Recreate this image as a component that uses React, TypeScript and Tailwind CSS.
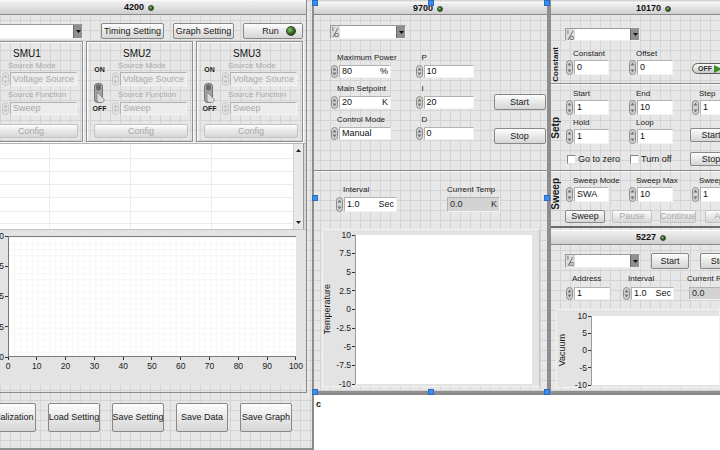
import clsx from 'clsx'
import type { ReactNode } from 'react'

const GRID =
  'bg-[#e7e7e7] bg-[linear-gradient(to_right,#d4d4d4_1px,transparent_1px),linear-gradient(to_bottom,#d4d4d4_1px,transparent_1px)] bg-[size:10px_10px]'

function Led({ big }: { big?: boolean }) {
  return (
    <span
      className={clsx(
        'inline-block shrink-0 rounded-full border border-[#33432d] bg-[radial-gradient(circle_at_35%_35%,#86c466,#2c5c1c_60%,#1b3a10)]',
        big ? 'w-[10px] h-[10px]' : 'w-[6px] h-[6px]'
      )}
    />
  )
}

function Header({ title, className }: { title: string; className?: string }) {
  return (
    <div
      className={clsx(
        'flex items-center gap-[4px] border-t border-t-[#fafafa] border-b border-b-[#8a8a8a] bg-[linear-gradient(#f1f1f1,#cfcfcf)] text-[9px] font-bold text-[#111]',
        className
      )}
    >
      <span>{title}</span>
      <Led />
    </div>
  )
}

function Spin({ h = 14, dim }: { h?: number; dim?: boolean }) {
  const c = dim ? '#bcbcbc' : '#727272'
  return (
    <svg width="7" height={h} viewBox={`0 0 7 ${h}`} className="shrink-0">
      <rect x="0.5" y="0.5" width="6" height={h - 1} rx="3" fill={dim ? '#e3e3e3' : '#d2d2d2'} stroke={dim ? '#c6c6c6' : '#8c8c8c'} />
      <path d="M3.5 2.5L5.5 5.5H1.5Z" fill={c} />
      <path d={`M3.5 ${h - 2.5}L5.5 ${h - 5.5}H1.5Z`} fill={c} />
    </svg>
  )
}

function Field({ className, value, unit, gray, dim }: { className?: string; value: string; unit?: string; gray?: boolean; dim?: boolean }) {
  return (
    <div
      className={clsx(
        'flex items-center justify-between shrink-0 px-[2px] border border-[#b2b2b2] border-b-[#f4f4f4] border-r-[#f4f4f4] text-[9px] whitespace-nowrap',
        gray ? 'bg-[#d3d3d3] text-[#2a2a2a]' : dim ? 'bg-[#ececec] text-[#a9a9a9]' : 'bg-white text-[#111]',
        className
      )}
    >
      <span>{value}</span>
      {unit && <span>{unit}</span>}
    </div>
  )
}

function Num({ className, fieldClass, value, unit, h = 14, dim }: { className?: string; fieldClass?: string; value: string; unit?: string; h?: number; dim?: boolean }) {
  return (
    <div className={clsx('flex items-center gap-[1px] shrink-0', className)}>
      <Spin h={h} dim={dim} />
      <Field className={fieldClass} value={value} unit={unit} dim={dim} />
    </div>
  )
}

function Lbl({ children, className }: { children: ReactNode; className?: string }) {
  return <div className={clsx('h-[9px] text-[8px] leading-[9px] whitespace-nowrap', className)}>{children}</div>
}

function Btn({ children, className, dim }: { children: ReactNode; className?: string; dim?: boolean }) {
  return (
    <div
      className={clsx(
        'flex items-center justify-center shrink-0 whitespace-nowrap rounded-[2px] border bg-[linear-gradient(#fdfdfd,#e8e8e8_50%,#d6d6d6)] text-[9px]',
        dim ? 'border-[#c3c3c3] text-[#a8a8a8]' : 'border-[#888] text-[#1a1a1a]',
        className
      )}
    >
      {children}
    </div>
  )
}

function Visa({ className, noIcon }: { className?: string; noIcon?: boolean }) {
  return (
    <div className={clsx('flex shrink-0 border border-[#9a9a9a] border-b-[#efefef] border-r-[#efefef] bg-white', className)}>
      {!noIcon && (
        <div className="relative w-[9px] flex flex-col justify-between px-[1px] bg-[#dcdcdc] text-[6px] leading-[6px] text-[#333]">
          <span>I</span>
          <span className="self-end">O</span>
          <svg className="absolute left-0 top-0" width="9" height="13">
            <path d="M7 2L2 11" stroke="#555" strokeWidth="0.8" />
          </svg>
        </div>
      )}
      <div className="flex-1" />
      <div className="w-[9px] flex items-center justify-center bg-[#8e8e8e] border-l border-[#6c6c6c]">
        <svg width="5" height="3">
          <path d="M0 0H5L2.5 3Z" fill="#111" />
        </svg>
      </div>
    </div>
  )
}

function YAxis({ labels, className }: { labels: string[]; className?: string }) {
  return (
    <div className={clsx('flex flex-col justify-between items-end -my-[5px] shrink-0', className)}>
      {labels.map(l => (
        <div key={l} className="h-[10px] flex items-center text-[8.5px] text-[#222] whitespace-nowrap">
          <span>{l}</span>
          <span className="w-[3px] h-px ml-[1px] bg-[#333]" />
        </div>
      ))}
    </div>
  )
}

function SideLabel({ children, className }: { children: ReactNode; className?: string }) {
  return (
    <div className={clsx('w-[10px] shrink-0 flex flex-col items-center', className)}>
      <span className="[writing-mode:vertical-rl] rotate-180 font-bold whitespace-nowrap leading-[10px]">{children}</span>
    </div>
  )
}

function Sep() {
  return <div className="h-[2px] shrink-0 border-t border-[#8a8a8a] bg-[#f8f8f8]" />
}

function Toggle() {
  return (
    <svg className="mt-[9px]" width="14" height="20" viewBox="0 0 14 20">
      <rect x="1.5" y="0.5" width="8" height="19" rx="3" fill="#a4a4a4" stroke="#5e5e5e" strokeWidth="0.8" />
      <rect x="3" y="1.5" width="5" height="6" rx="2" fill="#6a6a6a" />
      <path d="M4 9L11 16Q12 18.5 9.5 19.5L6 19.5Q4 19 4 17Z" fill="#dcdcdc" stroke="#6a6a6a" strokeWidth="0.6" />
    </svg>
  )
}

function Smu({ name, toggle, className }: { name: string; toggle?: boolean; className?: string }) {
  return (
    <div className={clsx('w-[107px] h-[101px] shrink-0 flex flex-col border border-[#8e8e8e] shadow-[inset_1px_1px_0_#fbfbfb,1px_1px_0_#fbfbfb]', className)}>
      <div className="h-[19px] pt-[6px] pr-[5px] text-center text-[10px] leading-[12px] text-[#111]">{name}</div>
      <div className="flex h-[55px]">
        <div className="w-[25px] flex flex-col items-center">
          {toggle && (
            <>
              <span className="mt-[5px] h-[8px] text-[7px] leading-[8px] font-bold">ON</span>
              <Toggle />
              <span className="mt-[2px] h-[8px] text-[7px] leading-[8px] font-bold">OFF</span>
            </>
          )}
        </div>
        <div className="flex flex-col">
          <Lbl className="ml-[6px] text-[#a9a9a9]">Source Mode</Lbl>
          <Num dim h={14} className="mt-[2px]" fieldClass="w-[67px] h-[14px]" value="Voltage Source" />
          <Lbl className="ml-[6px] mt-[4px] text-[#a9a9a9]">Source Function</Lbl>
          <Num dim h={13} className="mt-[3px]" fieldClass="w-[67px] h-[13px]" value="Sweep" />
        </div>
      </div>
      <Btn dim className="ml-[7px] mt-[8px] w-[94px] h-[14px]">Config</Btn>
    </div>
  )
}

function LeftPane() {
  const rows = [15, 13, 13, 13, 14, 12, 6]
  const xs = ['0', '10', '20', '30', '40', '50', '60', '70', '80', '90', '100']
  return (
    <div className="w-[307px] shrink-0 flex flex-col overflow-hidden border-r border-b border-[#8a8a8a]">
      <Header title="4200" className="h-[15px] pl-[124px] shrink-0" />
      <div className="flex items-center h-[16px] mt-[8px] shrink-0">
        <Visa noIcon className="-ml-[10px] w-[93px] h-[15px]" />
        <Btn className="ml-[18px] w-[63px] h-[16px]">Timing Setting</Btn>
        <Btn className="ml-[9px] w-[61px] h-[16px]">Graph Setting</Btn>
        <Btn className="ml-[9px] w-[60px] h-[16px] gap-[7px] pl-[12px]">
          Run <Led big />
        </Btn>
      </div>
      <div className="flex mt-[2px] h-[101px] shrink-0">
        <Smu name="SMU1" className="-ml-[24px]" />
        <Smu name="SMU2" toggle className="ml-[3px]" />
        <Smu name="SMU3" toggle className="ml-[3px]" />
      </div>
      <div className="flex h-[86px] mt-[1px] shrink-0 border-t border-[#b4b4b4]">
        <div className="w-[293px] bg-white flex flex-col overflow-hidden">
          {rows.map((h, i) => (
            <div key={i} className={clsx('flex shrink-0 border-b border-[#ececec]', h === 15 ? 'h-[15px]' : h === 14 ? 'h-[14px]' : h === 12 ? 'h-[12px]' : h === 6 ? 'h-[6px]' : 'h-[13px]')}>
              <div className="w-[50px] border-r border-[#ececec]" />
              <div className="w-[81px] border-r border-[#ececec]" />
              <div className="w-[81px] border-r border-[#ececec]" />
              <div className="flex-1" />
            </div>
          ))}
        </div>
        <div className="w-[10px] bg-[#e9e9e9] border-l border-[#d2d2d2] flex flex-col justify-between items-center py-[5px]">
          <svg width="5" height="3">
            <path d="M2.5 0L5 3H0Z" fill="#222" />
          </svg>
          <svg width="5" height="3">
            <path d="M0 0H5L2.5 3Z" fill="#222" />
          </svg>
        </div>
        <div className="flex-1 bg-[#d6d6d6] border-l border-[#9a9a9a]" />
      </div>
      <div className="h-[156px] shrink-0 bg-[#e3e3e3] border-t border-[#c4c4c4] pt-[6px] flex flex-col">
        <div className="flex">
          <YAxis labels={['10', '7.5', '5', '2.5', '0']} className="w-[30px] -ml-[22px] h-[131px]" />
          <div className="w-[288px] h-[121px] shrink-0 bg-white border-t border-l border-b border-[#7a7a7a] bg-[linear-gradient(to_right,#f7f7f7_1px,transparent_1px),linear-gradient(to_bottom,#f7f7f7_1px,transparent_1px)] bg-[size:5.76px_6.05px]" />
        </div>
        <div className="flex justify-between w-[308px] -ml-[2px]">
          {xs.map(x => (
            <div key={x} className="w-[20px] flex flex-col items-center">
              <span className="w-px h-[3px] bg-[#333]" />
              <span className="mt-[2px] text-[8.5px] text-[#222]">{x}</span>
            </div>
          ))}
        </div>
      </div>
    </div>
  )
}

function MiddlePane() {
  return (
    <div className="w-[237px] shrink-0 ml-[5px] flex flex-col border-x-2 border-b-2 border-[#8e8e8e]">
      <Header title="9700" className="mt-[2px] h-[13px] pl-[99px] shrink-0" />
      <div className="h-[155px] shrink-0">
        <Visa className="ml-[16px] mt-[10px] w-[76px] h-[14px]" />
        <div className="flex mt-[14px]">
          <div className="ml-[17px] flex flex-col">
            <Lbl className="ml-[6px]">Maximum Power</Lbl>
            <Num className="mt-[3px]" h={13} fieldClass="w-[52px] h-[13px]" value="80" unit="%" />
            <Lbl className="ml-[6px] mt-[6px]">Main Setpoint</Lbl>
            <Num className="mt-[3px]" h={13} fieldClass="w-[52px] h-[13px]" value="20" unit="K" />
            <Lbl className="ml-[6px] mt-[6px]">Control Mode</Lbl>
            <Num className="mt-[3px]" h={13} fieldClass="w-[52px] h-[13px]" value="Manual" />
          </div>
          <div className="ml-[19px] flex flex-col">
            <Lbl className="ml-[6px]">P</Lbl>
            <Num className="mt-[3px]" h={13} fieldClass="w-[50px] h-[13px]" value="10" />
            <Lbl className="ml-[6px] mt-[6px]">I</Lbl>
            <Num className="mt-[3px]" h={13} fieldClass="w-[50px] h-[13px]" value="20" />
            <Lbl className="ml-[6px] mt-[6px]">D</Lbl>
            <Num className="mt-[3px]" h={13} fieldClass="w-[50px] h-[13px]" value="0" />
          </div>
          <div className="ml-[20px] flex flex-col">
            <Btn className="mt-[41px] w-[52px] h-[16px] text-[9.5px]">Start</Btn>
            <Btn className="mt-[18px] w-[52px] h-[16px] text-[9.5px]">Stop</Btn>
          </div>
        </div>
      </div>
      <Sep />
      <div className="flex mt-[13px] shrink-0">
        <div className="ml-[22px] flex flex-col">
          <Lbl className="ml-[7px]">Interval</Lbl>
          <Num className="mt-[3px]" h={15} fieldClass="w-[53px] h-[15px]" value="1.0" unit="Sec" />
        </div>
        <div className="ml-[50px] flex flex-col">
          <Lbl>Current Temp</Lbl>
          <Field gray className="mt-[3px] w-[53px] h-[15px] border-[#a4a4a4]" value="0.0" unit="K" />
        </div>
      </div>
      <div className="ml-[8px] mt-[17px] w-[218px] h-[158px] shrink-0 bg-[#e3e3e3] border border-[#f2f2f2] border-r-[#c4c4c4] pt-[5px] flex">
        <div className="w-[9px] h-[149px] shrink-0 flex items-center justify-center text-[9px]">
          <span className="[writing-mode:vertical-rl] rotate-180 whitespace-nowrap">Temperature</span>
        </div>
        <YAxis labels={['10', '7.5', '5', '2.5', '0', '-2.5', '-5', '-7.5', '-10']} className="w-[23px] h-[159px]" />
        <div className="w-[177px] h-[149px] shrink-0 bg-white border-l border-[#9a9a9a]" />
      </div>
    </div>
  )
}

function RightColumn() {
  return (
    <div className="flex-1 min-w-0 flex flex-col overflow-hidden border-l-2 border-[#8e8e8e]">
      <div className="h-[228px] shrink-0 flex flex-col border-b-2 border-[#6a6a6a]">
        <Header title="10170" className="mt-[2px] h-[13px] pl-[85px] w-[230px] shrink-0" />
        <Visa className="ml-[14px] mt-[13px] w-[75px] h-[13px]" />
        <div className="flex h-[42px] shrink-0">
          <SideLabel className="justify-end pb-[1px] text-[8px]">Constant</SideLabel>
          <div className="w-[68px] pl-[5px] shrink-0 flex flex-col">
            <Lbl className="mt-[8px] ml-[7px]">Constant</Lbl>
            <Num className="mt-[2px]" h={15} fieldClass="w-[35px] h-[15px]" value="0" />
          </div>
          <div className="w-[61px] shrink-0 flex flex-col">
            <Lbl className="mt-[8px] ml-[7px]">Offset</Lbl>
            <Num className="mt-[2px]" h={15} fieldClass="w-[36px] h-[15px]" value="0" />
          </div>
          <div className="w-[60px] shrink-0">
            <div className="ml-[2px] mt-[22px] w-[34px] h-[11px] flex items-center rounded-full border border-[#5e5e5e] bg-[linear-gradient(#fbfbfb,#c9c9c9)] pl-[5px] text-[7px] font-bold text-[#333]">
              OFF
              <svg className="ml-[2px]" width="8" height="8">
                <path d="M0 0L8 4L0 8Z" fill="#3d8c2a" />
              </svg>
            </div>
          </div>
        </div>
        <Sep />
        <div className="flex h-[85px] shrink-0">
          <SideLabel className="justify-center text-[10px]">Setp</SideLabel>
          <div className="flex flex-col">
            <div className="flex mt-[4px]">
              <div className="w-[68px] pl-[5px] shrink-0 flex flex-col">
                <Lbl className="ml-[7px]">Start</Lbl>
                <Num className="mt-[2px]" h={15} fieldClass="w-[35px] h-[15px]" value="1" />
              </div>
              <div className="w-[61px] shrink-0 flex flex-col">
                <Lbl className="ml-[7px]">End</Lbl>
                <Num className="mt-[2px]" h={15} fieldClass="w-[36px] h-[15px]" value="10" />
              </div>
              <div className="w-[60px] pl-[2px] shrink-0 flex flex-col">
                <Lbl className="ml-[7px]">Step</Lbl>
                <Num className="mt-[2px]" h={15} fieldClass="w-[35px] h-[15px]" value="1" />
              </div>
            </div>
            <div className="flex mt-[3px]">
              <div className="w-[68px] pl-[5px] shrink-0 flex flex-col">
                <Lbl className="ml-[7px]">Hold</Lbl>
                <Num className="mt-[2px]" h={15} fieldClass="w-[35px] h-[15px]" value="1" />
              </div>
              <div className="w-[61px] shrink-0 flex flex-col">
                <Lbl className="ml-[7px]">Loop</Lbl>
                <Num className="mt-[2px]" h={15} fieldClass="w-[36px] h-[15px]" value="1" />
              </div>
              <div className="w-[60px] shrink-0">
                <Btn className="mt-[10px] w-[42px] h-[14px] text-[9.5px]">Start</Btn>
              </div>
            </div>
            <div className="flex mt-[8px] h-[14px] items-center">
              <div className="w-[68px] pl-[6px] shrink-0 flex items-center text-[9px] whitespace-nowrap">
                <span className="w-[9px] h-[9px] bg-white border border-[#888] border-b-[#e2e2e2] border-r-[#e2e2e2]" />
                <span className="ml-[2px]">Go to zero</span>
              </div>
              <div className="w-[61px] pl-[1px] shrink-0 flex items-center text-[9px] whitespace-nowrap">
                <span className="w-[9px] h-[9px] bg-white border border-[#888] border-b-[#e2e2e2] border-r-[#e2e2e2]" />
                <span className="ml-[2px]">Turn off</span>
              </div>
              <div className="w-[60px] shrink-0">
                <Btn className="w-[42px] h-[14px] text-[9.5px]">Stop</Btn>
              </div>
            </div>
          </div>
        </div>
        <Sep />
        <div className="flex flex-1">
          <SideLabel className="pt-[6px] text-[10px]">Sweep</SideLabel>
          <div className="flex flex-col">
            <div className="flex mt-[4px]">
              <div className="w-[68px] pl-[5px] shrink-0 flex flex-col">
                <Lbl className="ml-[7px]">Sweep Mode</Lbl>
                <Num className="mt-[2px]" h={15} fieldClass="w-[35px] h-[15px]" value="SWA" />
              </div>
              <div className="w-[61px] shrink-0 flex flex-col">
                <Lbl className="ml-[7px]">Sweep Max</Lbl>
                <Num className="mt-[2px]" h={15} fieldClass="w-[36px] h-[15px]" value="10" />
              </div>
              <div className="w-[60px] pl-[2px] shrink-0 flex flex-col">
                <Lbl className="ml-[7px]">Sweep Min</Lbl>
                <Num className="mt-[2px]" h={15} fieldClass="w-[35px] h-[15px]" value="1" />
              </div>
            </div>
            <div className="flex mt-[8px]">
              <Btn className="ml-[4px] w-[40px] h-[13px] border-[#666] text-[9.5px]">Sweep</Btn>
              <Btn dim className="ml-[7px] w-[40px] h-[13px] text-[9.5px]">Pause</Btn>
              <Btn dim className="ml-[8px] w-[36px] h-[13px] text-[9.5px]">Continue</Btn>
              <Btn dim className="ml-[9px] w-[40px] h-[13px] text-[9.5px]">Abort</Btn>
            </div>
          </div>
        </div>
      </div>
      <div className="flex-1 flex flex-col border-b-2 border-[#8e8e8e]">
        <Header title="5227" className="mt-[2px] h-[15px] pl-[85px] w-[230px] shrink-0" />
        <div className="flex items-center mt-[8px] h-[16px] shrink-0">
          <Visa className="ml-[14px] w-[75px] h-[14px]" />
          <Btn className="ml-[11px] w-[38px] h-[16px] text-[9.5px]">Start</Btn>
          <Btn className="ml-[11px] w-[40px] h-[16px] text-[9.5px]">Stop</Btn>
        </div>
        <div className="flex mt-[5px] shrink-0">
          <div className="ml-[15px] flex flex-col">
            <Lbl className="ml-[6px]">Address</Lbl>
            <Num className="mt-[4px]" h={13} fieldClass="w-[36px] h-[13px]" value="1" />
          </div>
          <div className="ml-[13px] flex flex-col">
            <Lbl className="ml-[5px]">Interval</Lbl>
            <Num className="mt-[4px]" h={13} fieldClass="w-[43px] h-[13px]" value="1.0" unit="Sec" />
          </div>
          <div className="ml-[15px] flex flex-col">
            <Lbl className="-ml-[2px]">Current Reading</Lbl>
            <Field gray className="mt-[4px] w-[44px] h-[13px] border-[#a4a4a4]" value="0.0" />
          </div>
        </div>
        <div className="ml-[5px] mt-[9px] h-[79px] shrink-0 bg-[#e3e3e3] border border-[#f2f2f2] pt-[6px] flex">
          <div className="w-[10px] h-[69px] shrink-0 flex items-center justify-center text-[9px]">
            <span className="[writing-mode:vertical-rl] rotate-180 whitespace-nowrap">Vacuum</span>
          </div>
          <YAxis labels={['10', '5', '0', '-5', '-10']} className="w-[24px] h-[79px]" />
          <div className="flex-1 h-[69px] bg-white border-l border-[#9a9a9a]" />
        </div>
      </div>
    </div>
  )
}

export default function App() {
  return (
    <div className={clsx('relative w-[720px] h-[450px] overflow-hidden font-[family-name:Liberation_Sans,Arial,sans-serif] text-[#1a1a1a] leading-none', GRID)}>
      <div className="flex h-[393px]">
        <LeftPane />
        <MiddlePane />
        <RightColumn />
      </div>
      <div className="flex h-[57px]">
        <div className="w-[312px] shrink-0 flex items-start pt-[10px] overflow-hidden border-b-2 border-[#8e8e8e]">
          <Btn className="-ml-[16px] w-[52px] h-[29px]">Initialization</Btn>
          <Btn className="ml-[12px] w-[52px] h-[29px]">Load Setting</Btn>
          <Btn className="ml-[12px] w-[52px] h-[29px]">Save Setting</Btn>
          <Btn className="ml-[12px] w-[52px] h-[29px]">Save Data</Btn>
          <Btn className="ml-[12px] w-[52px] h-[29px]">Save Graph</Btn>
        </div>
        <div className="flex-1 bg-white border-l-2 border-t-2 border-[#8a8a8a] px-[2px] pt-[5px] text-[9px] font-bold text-[#111]">c</div>
      </div>
      <span className="absolute left-[312px] top-[0px] w-[6px] h-[6px] bg-[#3b8df2] border border-[#2a6cc4]" />
      <span className="absolute left-[428px] top-[0px] w-[6px] h-[6px] bg-[#3b8df2] border border-[#2a6cc4]" />
      <span className="absolute left-[544px] top-[0px] w-[6px] h-[6px] bg-[#3b8df2] border border-[#2a6cc4]" />
      <span className="absolute left-[312px] top-[195px] w-[6px] h-[6px] bg-[#3b8df2] border border-[#2a6cc4]" />
      <span className="absolute left-[544px] top-[195px] w-[6px] h-[6px] bg-[#3b8df2] border border-[#2a6cc4]" />
      <span className="absolute left-[312px] top-[389px] w-[6px] h-[6px] bg-[#3b8df2] border border-[#2a6cc4]" />
      <span className="absolute left-[428px] top-[389px] w-[6px] h-[6px] bg-[#3b8df2] border border-[#2a6cc4]" />
      <span className="absolute left-[544px] top-[389px] w-[6px] h-[6px] bg-[#3b8df2] border border-[#2a6cc4]" />
    </div>
  )
}
